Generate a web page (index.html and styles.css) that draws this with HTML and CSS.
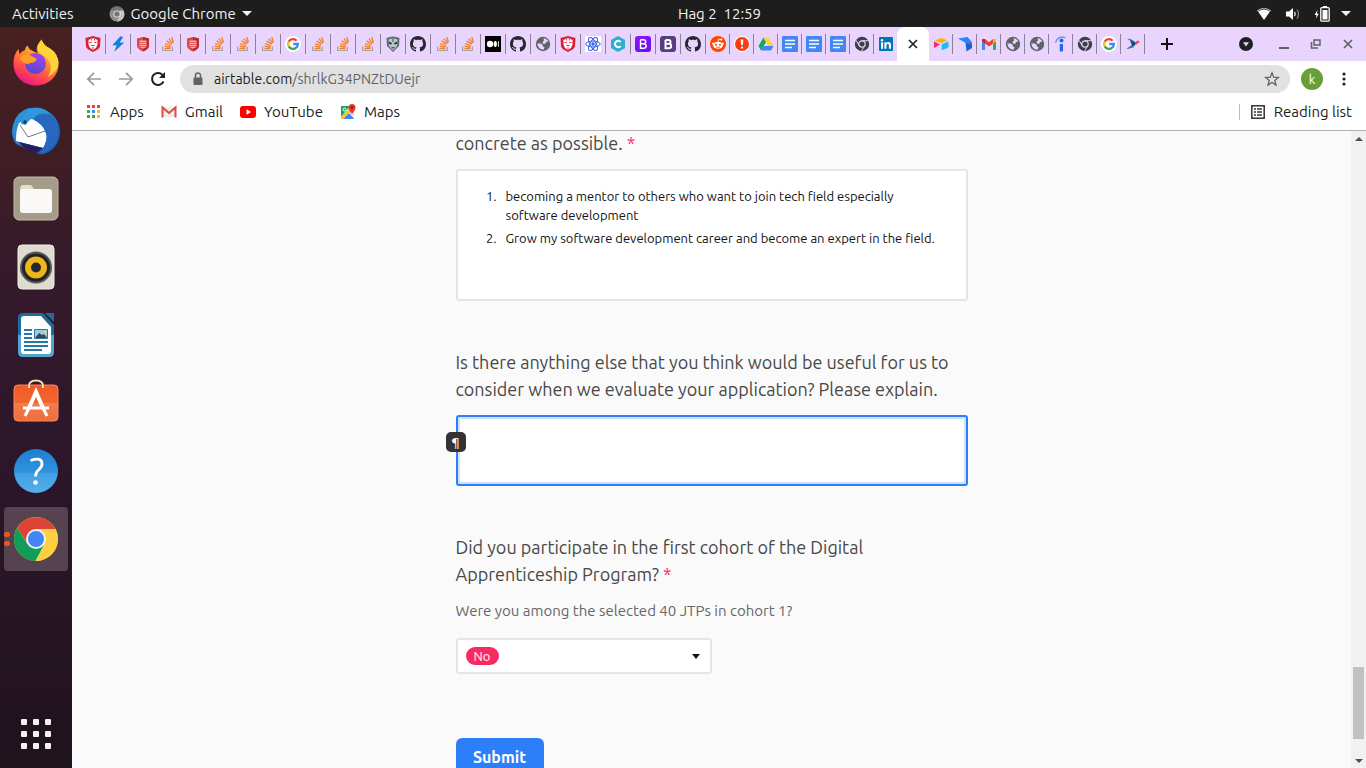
FILE: index.html
```html
<!DOCTYPE html>
<html lang="en">
<head>
<meta charset="utf-8">
<title>Application form</title>
<link rel="stylesheet" href="styles.css">
</head>
<body>
<svg class="defs" aria-hidden="true">
  <defs>
    <linearGradient id="ff" x1=".8" y1="0" x2=".3" y2="1"><stop offset="0" stop-color="#ffe540"/><stop offset=".4" stop-color="#ff9a2b"/><stop offset=".75" stop-color="#ff4450"/><stop offset="1" stop-color="#e5158b"/></linearGradient>
    <linearGradient id="ffc" x1=".7" y1="0" x2=".3" y2="1"><stop offset="0" stop-color="#a344f0"/><stop offset="1" stop-color="#5548c8"/></linearGradient>
    <linearGradient id="tb" x1="0" y1="0" x2="1" y2="1"><stop offset="0" stop-color="#2e9fe6"/><stop offset="1" stop-color="#174fa5"/></linearGradient>
    <linearGradient id="help" x1="0" y1="0" x2="0" y2="1"><stop offset="0" stop-color="#1e7fd0"/><stop offset=".54" stop-color="#3093dd"/><stop offset=".55" stop-color="#41a0e4"/><stop offset="1" stop-color="#52afe9"/></linearGradient>
    <linearGradient id="bag" x1="0" y1="0" x2="0" y2="1"><stop offset="0" stop-color="#f15a26"/><stop offset=".5" stop-color="#f2652f"/><stop offset=".51" stop-color="#f47b4b"/><stop offset="1" stop-color="#ef6e3c"/></linearGradient>
    <linearGradient id="bs" x1="0" y1="0" x2="1" y2="1"><stop offset="0" stop-color="#9013fe"/><stop offset="1" stop-color="#6610f2"/></linearGradient>
  </defs>
  <symbol id="shield" viewBox="0 0 16 16"><path fill="#db1f35" d="M8 0 15.500 2 15 10.500Q14.500 13 8 16 1.500 13 1 10.500L.5 2Z"/><path fill="#fff" d="M3.500 4 6.500 2.500h3l3 1.500v4.500L11 12l-3 1.800L5 12 3.500 8.500Z"/><path stroke="#db1f35" stroke-width=".9" fill="none" d="M4.500 6.500h2.300M9.200 6.500h2.300M6.300 9.500h3.400M8 11v2M6.500 3v1.500M9.500 3v1.500"/></symbol>
  <symbol id="bolt" viewBox="0 0 16 16"><path fill="#0b83dc" d="M10.500.3 2.300 9.300h4.400L4.300 15.800l10-9.300H9.600l3.600-5.500Z"/></symbol>
  <symbol id="brick" viewBox="0 0 16 16"><path fill="#e0474b" d="M8 1l6 1.500v7Q14 13 8 15.500 2 13 2 9.500v-7Z"/><path fill="#b72b32" d="M8 1l6 1.500v7Q14 13 8 15.500Z"/><path fill="#f3b5b2" d="M4.500 4.500h7V11L8 12.500 4.500 11Z"/><path stroke="#d94a4a" stroke-width=".8" d="M4 6.500h8M4 8.500h8M4 10.500h8"/></symbol>
  <symbol id="so" viewBox="0 0 16 16"><path fill="none" stroke="#a3a3ab" stroke-width="1.200" d="M2.600 10.500v4h9.800v-4"/><path fill="none" stroke="#f48024" stroke-width="1.300" d="M4.500 12.500h6M4.600 10.200l6 .8M5.200 7.600l5.700 1.900M6.700 4.900l5 3.200M8.900 2.600l3.800 4.600M11.700 1l1.800 5.500"/></symbol>
  <symbol id="google" viewBox="0 0 16 16"><circle cx="8" cy="8" r="8" fill="#fff"/><g fill="none" stroke-width="2.300"><path stroke="#ea4335" d="M3.700 5.600A4.900 4.900 0 0 1 11.600 4.700"/><path stroke="#fbbc05" d="M3.700 5.600a4.900 4.900 0 0 0 0 4.800"/><path stroke="#34a853" d="M3.700 10.400A4.900 4.900 0 0 0 11.200 11.700"/><path stroke="#4285f4" d="M11.200 11.700Q12.800 10.300 12.900 8H8.200"/></g></symbol>
  <symbol id="mask" viewBox="0 0 16 16"><path fill="#5f6b70" d="M1.500 2Q8-1 14.500 2L14 10 8 16 2 10Z"/><path fill="#b9c5c7" d="M3.500 3.500 8 2l4.500 1.500L12 10l-4 4.500L4 10Z"/><path fill="#263238" d="M3.500 5.500 7 7l-.5 1.500L4 7.800ZM12.500 5.500 9 7l.5 1.500L12 7.800ZM6 11.200h4l-2 1.500ZM7.600 2h.8v4h-.8Z"/></symbol>
  <symbol id="github" viewBox="0 0 16 16"><path fill="#24292f" d="M8 0C3.580 0 0 3.580 0 8c0 3.540 2.290 6.530 5.470 7.590.4.070.55-.17.55-.38 0-.19-.01-.82-.01-1.490-2.010.37-2.530-.49-2.690-.94-.09-.23-.48-.94-.82-1.130-.28-.15-.68-.52-.01-.53.63-.01 1.080.58 1.230.82.72 1.210 1.870.87 2.330.66.070-.52.28-.87.51-1.070-1.780-.2-3.640-.89-3.640-3.950 0-.87.31-1.590.82-2.150-.08-.2-.36-1.020.08-2.120 0 0 .67-.21 2.200.82.64-.18 1.320-.27 2-.27s1.360.09 2 .27c1.530-1.040 2.200-.82 2.200-.82.44 1.100.16 1.920.08 2.120.51.56.82 1.270.82 2.150 0 3.070-1.870 3.750-3.650 3.950.29.25.54.73.54 1.480 0 1.070-.01 1.930-.01 2.200 0 .21.15.46.55.38A8 8 0 0 0 16 8c0-4.420-3.580-8-8-8Z"/></symbol>
  <symbol id="medium" viewBox="0 0 16 16"><path d="M0 0h16v16H0z"/><circle cx="5" cy="8" r="3.200" fill="#fff"/><ellipse cx="10.300" cy="8" rx="1.600" ry="3" fill="#fff"/><path stroke="#fff" stroke-width=".9" d="M13.400 5.200v5.600"/></symbol>
  <symbol id="globe" viewBox="0 0 16 16"><circle cx="8" cy="8" r="7.200" fill="#606368"/><path fill="#e8d4fc" d="M8.500 2.300Q12 2.500 13.300 5.500L11 6 10.500 7.800H8.200L7.500 6 9 4.500ZM2.300 7.500H6L7.800 9v1.500l1.700.5-.8 2.700Q3 13.500 2.300 7.500Z"/></symbol>
  <symbol id="react" viewBox="0 0 16 16"><path fill="#fff" d="M0 0h16v16H0z"/><g fill="none" stroke="#3b63e8" stroke-width="1"><ellipse cx="8" cy="8" rx="7.200" ry="2.900"/><ellipse cx="8" cy="8" rx="7.200" ry="2.900" transform="rotate(60 8 8)"/><ellipse cx="8" cy="8" rx="7.200" ry="2.900" transform="rotate(120 8 8)"/></g><circle cx="8" cy="8" r="1.700" fill="#3b63e8"/></symbol>
  <symbol id="hex" viewBox="0 0 16 16"><path fill="#2faed3" d="m8 0 7 4v8l-7 4-7-4V4Z"/><path fill="none" stroke="#fff" stroke-width="2" d="M10.700 6A3.200 3.200 0 1 0 10.700 10"/></symbol>
  <symbol id="bootA" viewBox="0 0 16 16"><rect width="16" height="16" rx="3" fill="url(#bs)"/><path fill="none" stroke="#fff" stroke-width="1.400" d="M5.500 3.700h3Q10.700 3.700 10.700 5.700T8.500 7.800h-3M8.500 7.800Q11.200 7.800 11.200 10T8.500 12.300h-3V3.700"/></symbol>
  <symbol id="bootB" viewBox="0 0 16 16"><rect width="16" height="16" rx="3" fill="#563d7c"/><path fill="none" stroke="#fff" stroke-width="2" d="M5.500 4h3Q10.500 4 10.500 5.900T8.500 7.800h-3M8.500 7.800Q11.200 7.800 11.200 10T8.500 12.200h-3V4"/></symbol>
  <symbol id="reddit" viewBox="0 0 16 16"><circle cx="8" cy="8" r="8" fill="#ff4500"/><ellipse cx="8" cy="9.300" rx="5" ry="3.500" fill="#fff"/><circle cx="3.200" cy="7.600" r="1.200" fill="#fff"/><circle cx="12.800" cy="7.600" r="1.200" fill="#fff"/><circle cx="11.200" cy="3.600" r="1.100" fill="#fff"/><path fill="none" stroke="#fff" stroke-width=".8" d="m8 6 .7-3 2.500.6"/><g fill="#ff4500"><circle cx="6" cy="8.700" r="1"/><circle cx="10" cy="8.700" r="1"/></g><path fill="none" stroke="#ff4500" stroke-width=".8" d="M5.800 10.900q2.200 1.200 4.400 0"/></symbol>
  <symbol id="alert" viewBox="0 0 16 16"><circle cx="8" cy="8" r="8" fill="#fff"/><circle cx="8" cy="8" r="7" fill="#fa3d0e"/><path fill="#fff" d="M6.700 3.500h2.600L9 9H7ZM7 10.400h2v2H7z"/></symbol>
  <symbol id="drive" viewBox="0 0 16 16"><path fill="#11a861" d="M5.500 1.500 8 6 3 14.500.5 10Z"/><path fill="#ffcf48" d="M5.500 1.500h5l5 8.500h-5Z"/><path fill="#4285f4" d="M5.500 10h10L13 14.500H3Z"/></symbol>
  <symbol id="docs" viewBox="0 0 16 16"><rect width="16" height="16" rx="1" fill="#4285f4"/><path stroke="#fff" stroke-width="1.600" d="M3 4.500h10M3 8h10M3 11.500h7"/></symbol>
  <symbol id="chromeGray" viewBox="0 0 16 16"><circle cx="8" cy="8" r="7.200" fill="#3c4047"/><circle cx="8" cy="8" r="3.200" fill="none" stroke="#e8d4fc" stroke-width="1.200"/><path stroke="#e8d4fc" d="M8 4.700h6.500M5.200 9.700 2 4.200M10.800 9.700 7.500 15.200"/></symbol>
  <symbol id="chromeBar" viewBox="0 0 16 16"><circle cx="8" cy="8" r="7.500" fill="#8f8f8f"/><path fill="#747474" d="M1.500 4A7.500 7.500 0 0 1 14.500 4L8 5Z"/><path fill="#c4c4c4" d="M14.500 4.500A7.500 7.500 0 0 1 8 15.500l3-6V4.500Z"/><circle cx="8" cy="8" r="3.500" fill="#ededed"/><circle cx="8" cy="8" r="2.700" fill="#747474"/></symbol>
  <symbol id="linkedin" viewBox="0 0 16 16"><rect x="1" y="1" width="14" height="14" rx="1" fill="#0077b5"/><path fill="#fff" d="M3 6.200h2.100v6.600H3zM6.400 6.200h2v1Q10 5.300 12 6.400q1 .7 1 2.500v3.900h-2.100V9.300q0-1.500-1.100-1.500T8.500 9.300v3.500H6.400z"/><circle cx="4" cy="4.200" r="1.200" fill="#fff"/></symbol>
  <symbol id="airtable" viewBox="0 0 16 16"><path fill="#fcb400" d="M7.300 2.200 1.500 4.600l6.500 2.500 6.500-2.500-5.700-2.400Q8 2 7.300 2.200Z"/><path fill="#18bfff" d="M8.700 8.200v6l6.800-2.600V5.600Z"/><path fill="#f82b60" d="m1 5.600 6 2.800-5.500 3.300H1Z"/></symbol>
  <symbol id="kite" viewBox="0 0 16 16"><path fill="#2684ff" d="M1 2.500 10.500 1l4.500 5.300V12L8 6.500Z"/><path fill="#1b62cf" d="M8.500 6.500 15 8.500V12L9.500 15.500Z"/></symbol>
  <symbol id="gmail" viewBox="0 0 16 16"><path fill="#4285f4" d="M1 5l3 2.300V14H2q-1 0-1-1Z"/><path fill="#34a853" d="m15 5-3 2.300V14h2q1 0 1-1Z"/><path fill="#ea4335" d="M1 3.500 4 3l4 3.200L12 3l3 .5-3 4-4 3-4-3Z"/><path fill="#fbbc04" d="M12 3.200Q15 2 15 4.500V5.200L12 7.500Z"/><path fill="#c5221f" d="M4 3.200Q1 2 1 4.500V5.200L4 7.500Z"/></symbol>
  <symbol id="indeed" viewBox="0 0 16 16"><circle cx="8.500" cy="4.600" r="2" fill="#2164f3"/><path fill="#2164f3" d="M6.800 8h3.200v7.500H6.800z"/><path fill="none" stroke="#4a91f5" stroke-width="1.200" d="M2.500 6.500Q5-.8 12.500 1.700"/></symbol>
  <symbol id="bird" viewBox="0 0 16 16"><path fill="#2378ad" d="M2 2.500Q8 3 11 7L8 9 5.500 5Z"/><path fill="#203a72" d="M5 5Q9 7 11.500 7L8 11.500 1.500 13 7 9Z"/><path fill="#e94f64" d="M10 6.500 12.500 4.500 15 5.500 11 9Z"/><path fill="#2aa6c7" d="M10.500 8.500 8 11.500 1.500 13Z"/></symbol>
</svg>

<header class="topbar">
  <div class="topbar-left">
    <button type="button">Activities</button>
    <button type="button" class="appmenu"><svg class="ico"><use href="#chromeBar"/></svg>Google Chrome<i class="caret"></i></button>
  </div>
  <time>Hag 2&nbsp; 12:59</time>
  <div class="topbar-right" aria-label="System status">
    <svg class="ico" viewBox="0 0 16 16"><path fill="none" stroke="#aaa" stroke-width="1.200" d="M1.200 5Q8-.5 14.800 5"/><path fill="#fff" d="M2 5.500Q8 1.500 14 5.500L8 14Z"/></svg>
    <svg class="ico" viewBox="0 0 16 16"><path fill="#fff" d="M1 5.500h3L8 2v12l-4-3.500H1Z"/><path fill="none" stroke="#fff" stroke-width="1.200" d="M9.500 5.800q1.500 2.200 0 4.400"/><path fill="none" stroke="#888" stroke-width="1.200" d="M12 3.500q3 4.500 0 9"/></svg>
    <svg class="ico" viewBox="0 0 16 16"><path fill="#fff" d="M3.500 4 .5 9h2L2 12.500 4.800 7.700H3ZM9 0h4v2H9zM8.500 4h5v9.500h-5z"/><rect x="6.800" y="1.700" width="8.400" height="13.500" rx="1" fill="none" stroke="#fff" stroke-width="1.300"/></svg>
    <i class="caret"></i>
  </div>
</header>

<div class="desktop">
  <nav class="dock" aria-label="Dock">
    <a href="#firefox" aria-label="Firefox"><svg viewBox="0 0 48 48"><path fill="url(#ff)" d="M24 46.500C11 46.500 1.500 37 1.500 24.500 1.500 17 4 13 6.500 10L7.500 15Q10 12 13 11 13 8 15.500 6.500 17 11 23 13L26 14Q22 9 29.500.5 31 6 38 9.500 47 15 46.500 26C46 37.500 36.500 46.500 24 46.500Z"/><path fill="#ffd43b" d="M29.500.5Q24 8 27 14L35 19Q42 27 36 38 46 32 46.500 24 46 15 38 9.500 31 6 29.500.5Z"/><circle cx="23.500" cy="24.500" r="10.500" fill="url(#ffc)"/><path fill="#ff9f22" d="M7.500 20Q11 13.500 18 16L25 20Q23 24 18 24 15 27 10 22Z"/></svg></a>
    <a href="#thunderbird" aria-label="Thunderbird"><svg viewBox="0 0 48 48"><path fill="url(#tb)" d="M24 1C36 1 48 11 48 25 48 38 39 46 29 47.500L24 46 4 37Q-2 28 1 18 5 4 17 1Z"/><path fill="#fff" d="M7 16 16 11Q31 14 35 25 35 35 31 41L4 34Q4 22 7 16Z"/><path fill="none" stroke="#777" d="m8 18 8 12 17-6"/><path fill="#3097dd" d="M9 17Q9 7 20 1 30-1 38 7 28 5 24 9 16 13 14 18Z"/><path fill="#2767bd" d="M24 9Q36 3 44 14 50 28 41 40L35 44 29 46 31 41Q37 33 33 24 30 17 22 13Z"/><path fill="#231d58" d="M7 35 31 41 25 46Q13 44 7 35Z"/><circle cx="13" cy="15" r="1.800" fill="#203050"/></svg></a>
    <a href="#files" aria-label="Files"><svg viewBox="0 0 48 48"><rect x="2" y="2" width="44" height="43" rx="5" fill="#a49c88" stroke="#c1b9a7"/><path fill="#e3ddd2" d="M8 15q0-5 3-5h8l3 4-2 2H8Z"/><rect x="8" y="14" width="32" height="24" rx="3" fill="#faf9f7"/></svg></a>
    <a href="#rhythmbox" aria-label="Rhythmbox"><svg viewBox="0 0 48 48"><rect x="6" y="2" width="36" height="44" rx="4" fill="#dfdbcf" stroke="#f0ede6"/><circle cx="24" cy="24.500" r="16" fill="#55575c"/><circle cx="24" cy="24.500" r="14" fill="#202224"/><circle cx="24" cy="24.500" r="11" fill="#edb61c"/><circle cx="24" cy="24.500" r="5" fill="#28282b"/></svg></a>
    <a href="#writer" aria-label="LibreOffice Writer"><svg viewBox="0 0 48 48"><path fill="#1b6d9c" d="M11 2h20l11 12v27q0 5-5 5H11q-5 0-5-5V7q0-5 5-5ZM33 2h9v9Z"/><path fill="#51a5cf" d="M6 24h36v17q0 5-5 5H11q-5 0-5-5Z"/><path fill="#fff" d="M12 5h17l10 11v24q0 3-3 3H12q-3 0-3-3V8q0-3 3-3Z"/><path stroke="#2678a7" stroke-width="2" d="M12 19h8M12 23h8M12 27h8M12 31h24M12 35h24M12 39h18"/><path fill="#93cef1" stroke="#2678a7" d="M22.500 18.500h13v9h-13z"/><path fill="#444" d="m23 27 4-5 3 2 2-1 3 4Z"/><circle cx="33" cy="21" r="1.500" fill="#fc4"/></svg></a>
    <a href="#software" aria-label="Ubuntu Software"><svg viewBox="0 0 48 48"><rect x="2" y="6" width="44" height="36" rx="4" fill="url(#bag)" stroke="#f78b63"/><path fill="none" stroke="#f2dbaf" stroke-width="2" d="M17 9V7q0-5.500 7-5.500T31 7v2"/><path fill="none" stroke="#fff" stroke-width="3" d="m13 37 4-8M35 37l-4-8M11 29h26"/><path fill="none" stroke="#fff" stroke-width="4" d="m17 29 7-16 7 16"/></svg></a>
    <a href="#help" aria-label="Help"><svg viewBox="0 0 48 48"><circle cx="24" cy="24" r="22" fill="url(#help)"/><path fill="none" stroke="#fff" stroke-width="2.800" d="M18.500 13.500q11.500-4 11.500 3.500 0 3-3.500 6-3 2.500-3 6.500"/><circle cx="23.500" cy="35.500" r="2.300" fill="#fff"/></svg></a>
    <a href="#chrome" class="active" aria-label="Google Chrome"><svg viewBox="0 0 48 48"><circle cx="24" cy="24" r="22" fill="#fdd040"/><path fill="#db4437" d="M5 13A22 22 0 0 1 43.500 14H24L16 29Z"/><path fill="#0f9d58" d="M5 13A22 22 0 0 0 23.500 46L33 28 15.500 29Z"/><path fill="#fdd040" d="M24 14h19.500A22 22 0 0 1 23.500 46L32.500 29Z"/><circle cx="24" cy="24" r="10" fill="#f1f1f1"/><circle cx="24" cy="24" r="8" fill="#4285f4"/></svg></a>
    <button type="button" class="apps-grid" aria-label="Show applications"><svg viewBox="0 0 30 30"><g fill="#f2f1f0"><rect width="6" height="6" rx="1"/><rect x="12" width="6" height="6" rx="1"/><rect x="24" width="6" height="6" rx="1"/><rect y="12" width="6" height="6" rx="1"/><rect x="12" y="12" width="6" height="6" rx="1"/><rect x="24" y="12" width="6" height="6" rx="1"/><rect y="24" width="6" height="6" rx="1"/><rect x="12" y="24" width="6" height="6" rx="1"/><rect x="24" y="24" width="6" height="6" rx="1"/></g></svg></button>
  </nav>

  <div class="browser">
    <div class="tabs">
      <div class="group wide">
        <span><svg><use href="#shield"/></svg></span><span><svg><use href="#bolt"/></svg></span><span><svg><use href="#brick"/></svg></span><span><svg><use href="#so"/></svg></span><span><svg><use href="#brick"/></svg></span><span><svg><use href="#so"/></svg></span><span><svg><use href="#so"/></svg></span><span><svg><use href="#so"/></svg></span><span><svg><use href="#google"/></svg></span><span><svg><use href="#so"/></svg></span><span><svg><use href="#so"/></svg></span><span><svg><use href="#so"/></svg></span><span><svg><use href="#mask"/></svg></span><span><svg><use href="#github"/></svg></span><span><svg><use href="#so"/></svg></span><span><svg><use href="#so"/></svg></span><span><svg><use href="#medium"/></svg></span><span><svg><use href="#github"/></svg></span><span><svg><use href="#globe"/></svg></span><span><svg><use href="#shield"/></svg></span><span><svg><use href="#react"/></svg></span><span><svg><use href="#hex"/></svg></span><span><svg><use href="#bootA"/></svg></span><span><svg><use href="#bootB"/></svg></span><span><svg><use href="#github"/></svg></span>
      </div>
      <div class="group">
        <span><svg><use href="#reddit"/></svg></span><span><svg><use href="#alert"/></svg></span><span><svg><use href="#drive"/></svg></span><span><svg><use href="#docs"/></svg></span><span><svg><use href="#docs"/></svg></span><span><svg><use href="#docs"/></svg></span><span><svg><use href="#chromeGray"/></svg></span><span class="last"><svg><use href="#linkedin"/></svg></span>
      </div>
      <div class="current"><button type="button" aria-label="Close tab"><svg viewBox="0 0 16 16"><path stroke="#202124" stroke-width="1.700" d="m4 4 8 8M12 4l-8 8"/></svg></button></div>
      <div class="group">
        <span><svg><use href="#airtable"/></svg></span><span><svg><use href="#kite"/></svg></span><span><svg><use href="#gmail"/></svg></span><span><svg><use href="#globe"/></svg></span><span><svg><use href="#globe"/></svg></span><span><svg><use href="#indeed"/></svg></span><span><svg><use href="#chromeGray"/></svg></span><span><svg><use href="#google"/></svg></span><span><svg><use href="#bird"/></svg></span>
      </div>
      <button type="button" class="newtab" aria-label="New tab"><svg viewBox="0 0 16 16"><path stroke="#111" stroke-width="2" d="M8 2v12M2 8h12"/></svg></button>
      <div class="window-controls">
        <button type="button" aria-label="Search tabs"><svg viewBox="0 0 16 16"><circle cx="8" cy="8" r="7" fill="#202124"/><path fill="#e8d4fc" d="M5 6.300h6L8 10.500Z"/></svg></button>
        <button type="button" aria-label="Minimize"><svg viewBox="0 0 16 16"><path stroke="#5f6368" stroke-width="2" d="M3 12h10"/></svg></button>
        <button type="button" aria-label="Restore"><svg viewBox="0 0 16 16"><path fill="none" stroke="#5f6368" stroke-width="1.500" d="M6 4h6v5H6zM3.500 6v6H10"/></svg></button>
        <button type="button" aria-label="Close window"><svg viewBox="0 0 16 16"><path stroke="#5f6368" stroke-width="1.700" d="m4 4 8 8M12 4l-8 8"/></svg></button>
      </div>
    </div>

    <div class="toolbar">
      <button type="button" aria-label="Back"><svg viewBox="0 0 16 16"><path fill="none" stroke="#999" stroke-width="1.700" d="M15 8H2M8 1.800 1.800 8 8 14.200"/></svg></button>
      <button type="button" aria-label="Forward"><svg viewBox="0 0 16 16"><path fill="none" stroke="#999" stroke-width="1.700" d="M1 8h13M8 1.800 14.200 8 8 14.200"/></svg></button>
      <button type="button" aria-label="Reload"><svg viewBox="0 0 16 16"><path fill="none" stroke="#202124" stroke-width="2" d="M13.500 10.500A6 6 0 1 1 12.300 3.700L14 5.500"/><path fill="#202124" d="M15 1v6H9Z"/></svg></button>
      <div class="address">
        <svg class="lock" viewBox="0 0 16 16"><rect x="3.500" y="6.500" width="9" height="7.500" rx="1" fill="#5f6368"/><path fill="none" stroke="#5f6368" stroke-width="1.500" d="M5.500 7V4.500a2.500 2.500 0 0 1 5 0V7"/></svg>
        <div class="url" role="textbox" contenteditable="true" spellcheck="false" aria-label="Address">airtable.com<span>/shrlkG34PNZtDUejr</span></div>
        <button type="button" aria-label="Bookmark"><svg viewBox="0 0 16 16"><path fill="none" stroke="#5f6368" stroke-width="1.300" d="m8 1.800 1.700 4.400 4.700.3-3.600 3 1.200 4.500L8 11.500 4 14l1.200-4.500-3.600-3 4.700-.3Z"/></svg></button>
      </div>
      <button type="button" class="avatar" aria-label="Profile">k</button>
      <button type="button" aria-label="Menu"><svg viewBox="0 0 16 16"><g fill="#202124"><circle cx="8" cy="3" r="1.600"/><circle cx="8" cy="8" r="1.600"/><circle cx="8" cy="13" r="1.600"/></g></svg></button>
    </div>

    <nav class="bookmarks" aria-label="Bookmarks">
      <a href="#apps"><svg viewBox="0 0 16 16"><path fill="#ea4335" d="M1 1h3v3H1zM6 1h3v3H6zM11 1h3v3h-3z"/><path fill="#34a853" d="M1 6h3v3H1zM1 11h3v3H1zM6 11h3v3H6z"/><path fill="#4285f4" d="M6 6h3v3H6z"/><path fill="#fbbc04" d="M11 6h3v3h-3zM11 11h3v3h-3z"/></svg>Apps</a>
      <a href="#gmail-link"><svg viewBox="0 0 16 16"><path fill="#eee" d="M2 3h12v10H2z"/><path fill="none" stroke="#e04b40" stroke-width="2" d="M1.500 13.500V3.500L8 9l6.500-5.500v10"/></svg>Gmail</a>
      <a href="#youtube"><svg viewBox="0 0 16 16"><rect y="2" width="16" height="12" rx="3" fill="#f00"/><path fill="#fff" d="m6.500 5.300 4.500 2.700-4.500 2.700Z"/></svg>YouTube</a>
      <a href="#maps"><svg viewBox="0 0 16 16"><rect x="1" y="2" width="13" height="13" rx="1" fill="#dfe3e6"/><path fill="#1aa260" d="M1 2h9L1 13Z"/><path fill="#4285f4" d="m3 15 6-6 5 6Z"/><path fill="#fbc02d" d="m1 13 8-8 2 2-8 8H1Z"/><path fill="#e33b2e" d="M12 0a3.500 3.500 0 0 1 3.500 3.500Q15.500 6 12 10 8.500 6 8.500 3.500A3.500 3.500 0 0 1 12 0Z"/><circle cx="12" cy="3.500" r="1.300" fill="#811c16"/><circle cx="4.500" cy="5.500" r="1.500" fill="none" stroke="#fff"/></svg>Maps</a>
      <button type="button" class="reading"><svg viewBox="0 0 16 16"><rect x="1.800" y="1.800" width="12.400" height="12.400" fill="none" stroke="#333" stroke-width="1.500"/><path stroke="#333" stroke-width="1.300" d="M4 5h2M7 5h5M4 8h2M7 8h5M4 11h2M7 11h5"/></svg>Reading list</button>
    </nav>

    <div class="viewport">
      <main>
        <form>
          <section class="field">
            <p class="label" id="goals">concrete as possible. <b>*</b></p>
            <div class="richtext" role="textbox" aria-multiline="true" aria-labelledby="goals" contenteditable="true" spellcheck="false">
              <ol>
                <li>becoming a mentor to others who want to join tech field especially software development</li>
                <li>Grow my software development career and become an expert in the field.</li>
              </ol>
            </div>
          </section>
          <section class="field">
            <label class="label" for="extra">Is there anything else that you think would be useful for us to consider when we evaluate your application? Please explain.</label>
            <div class="editor"><textarea id="extra"></textarea><button type="button" class="para" aria-label="Paragraph format">¶</button></div>
          </section>
          <section class="field">
            <label class="label" for="cohort">Did you participate in the first cohort of the Digital Apprenticeship Program? <b>*</b></label>
            <p class="hint">Were you among the selected 40 JTPs in cohort 1?</p>
            <div class="choice"><select id="cohort"><option>No</option><option>Yes</option></select></div>
          </section>
          <button type="submit" class="submit">Submit</button>
        </form>
      </main>
      <div class="scrollbar" aria-hidden="true"><i class="up"></i><i class="thumb"></i><i class="down"></i></div>
    </div>
  </div>
</div>
</body>
</html>
```
FILE: styles.css
```css
* { box-sizing: border-box; }

body {
  margin: 0;
  height: 100vh;
  display: flex;
  flex-direction: column;
  overflow: hidden;
  font: 15px/20px "Ubuntu", "Noto Sans", sans-serif;
  color: #202124;
}

button {
  border: 0;
  padding: 0;
  background: none;
  font: inherit;
  color: inherit;
}

a { color: inherit; text-decoration: none; }
svg { display: block; width: 16px; height: 16px; flex: none; }
.defs { position: absolute; width: 0; height: 0; }

/* System bar */
.topbar {
  height: 27px;
  flex: none;
  display: grid;
  grid-template-columns: 1fr auto 1fr;
  align-items: center;
  padding: 0 15px 0 12px;
  background: #1d1d1d;
  color: #f2f2f2;
}
.topbar-left { display: flex; gap: 35px; margin-right: -72px; }
.appmenu { display: flex; align-items: center; gap: 6px; }
.topbar time { padding-left: 76px; }
.topbar-right { display: flex; justify-content: flex-end; align-items: center; gap: 13px; }
.caret { border: 5px solid transparent; border-top-color: #f2f2f2; border-bottom: 0; }
.topbar-right .caret { margin-left: -2px; }

.desktop { flex: 1; display: flex; min-height: 0; }

/* Dock */
.dock {
  width: 72px;
  flex: none;
  display: flex;
  flex-direction: column;
  align-items: center;
  gap: 4px;
  padding: 4px 4px 19px;
  background: linear-gradient(#48201f, #351a2b 35%, #2c162a 60%, #1f131c);
}
.dock a { width: 64px; height: 64px; display: grid; place-items: center; border-radius: 4px; position: relative; }
.dock a svg { width: 48px; height: 48px; }
.dock .active { background: #56434f; }
.dock .active::before {
  content: "";
  position: absolute;
  left: 0;
  top: 23px;
  width: 6px;
  height: 18px;
  background: radial-gradient(circle, #e95420 3px, transparent 3px) 0 0 / 6px 9px;
}
.apps-grid { margin-top: auto; }
.apps-grid svg { width: 30px; height: 30px; }

/* Tab strip */
.browser { flex: 1; min-width: 0; display: flex; flex-direction: column; background: #fff; }
.tabs { height: 34px; flex: none; display: flex; align-items: center; padding: 0 10px 0 9px; background: #e8d4fc; }
.group { display: flex; }
.group span { width: 24px; height: 20px; display: grid; place-items: center; border-right: 1px solid #8c8196; }
.wide span { width: 25px; }
.group .last { width: 23px; border: 0; }
.current { width: 32px; height: 34px; display: grid; place-items: center; background: #fff; border-radius: 8px 8px 0 0; }
.newtab { margin-left: 14px; }
.window-controls { margin-left: auto; display: flex; align-items: center; gap: 16px; }
.window-controls button:first-child { margin-right: 6px; }

/* Toolbar */
.toolbar { height: 36px; flex: none; display: flex; align-items: center; gap: 16px; padding: 0 14px; }
.address {
  flex: 1;
  height: 28px;
  margin: 0 -5px 0 -2px;
  display: flex;
  align-items: center;
  gap: 8px;
  padding: 0 10px;
  border-radius: 14px;
  background: #e1e1e1;
  font-size: 14px;
}
.url { flex: 1; outline: 0; }
.url span { color: #5f6368; }
.avatar { width: 22px; height: 22px; margin-right: -3px; border-radius: 50%; background: #689f38; color: #fff; font-size: 13px; }

/* Bookmarks */
.bookmarks { height: 34px; flex: none; display: flex; align-items: center; gap: 17px; padding: 0 14px 4px; border-bottom: 1px solid #b0b0b0; }
.bookmarks a, .reading { display: flex; align-items: center; gap: 8px; }
.reading { margin-left: auto; padding-left: 10px; border-left: 1px solid #bbb; height: 16px; }

/* Form page, scrolled down to its last questions */
.viewport { flex: 1; min-height: 0; display: flex; background: #fafafa; }
main { flex: 1; overflow: hidden; }
form { max-width: 512px; margin: -1px auto 0; }
.field { margin-bottom: 48px; }
.label { display: block; margin: 0 0 12px; font-size: 18px; line-height: 27px; color: #484848; }
.label b { color: #f82b60; font-weight: 400; }
.richtext {
  height: 132px;
  padding: 16px 24px;
  border: 2px solid #e5e5e5;
  border-radius: 3px;
  background: #fff;
  color: #111;
  font-size: 13px;
  line-height: 19px;
  outline: 0;
}
.richtext ol { margin: 0; padding-left: 24px; }
.richtext li { margin-bottom: 4px; }
.richtext li::marker { content: counter(list-item) ".\a0\a0\a0"; }
.editor { position: relative; }
.editor textarea {
  display: block;
  width: 100%;
  height: 71px;
  resize: none;
  outline: 0;
  border: 2px solid #2d7ff9;
  border-radius: 3px;
  background: #fff;
  box-shadow: inset 0 0 0 2px #cfdfff;
}
.para {
  position: absolute;
  left: -10px;
  top: 17px;
  width: 20px;
  height: 20px;
  border-radius: 5px;
  background: #333;
  color: #fff;
  font-size: 13px;
  line-height: 20px;
}
.hint { margin: 0 0 17px; line-height: 21px; color: #666; }
.choice { position: relative; width: 50%; border-radius: 3px; background: #fff; }
.choice::before { content: ""; position: absolute; left: 10px; top: 9px; width: 33px; height: 18px; border-radius: 9px; background: #f82b60; }
.choice::after { content: ""; position: absolute; right: 12px; top: 16px; border: 4px solid transparent; border-top: 5px solid #111; border-bottom: 0; }
.choice select {
  display: block;
  position: relative;
  width: 100%;
  height: 36px;
  padding: 0 16px;
  appearance: none;
  border: 2px solid #e5e5e5;
  border-radius: 3px;
  background: transparent;
  color: #fff;
  font: inherit;
  font-size: 13px;
}
.submit { margin-top: 16px; height: 38px; min-width: 88px; padding: 0 16px; border-radius: 6px; background: #2d7ff9; color: #fff; font-size: 16px; font-weight: 600; }

/* Scrollbar */
.scrollbar { width: 15px; flex: none; display: flex; flex-direction: column; align-items: center; padding: 6px 0 5px; background: #f1f1f1; }
.up, .down { border: 4px solid transparent; }
.up { border-bottom-color: #505050; border-top: 0; }
.down { border-top-color: #505050; border-bottom: 0; }
.thumb { width: 11px; height: 72px; margin: auto 0 20px; background: #c1c1c1; }
```
